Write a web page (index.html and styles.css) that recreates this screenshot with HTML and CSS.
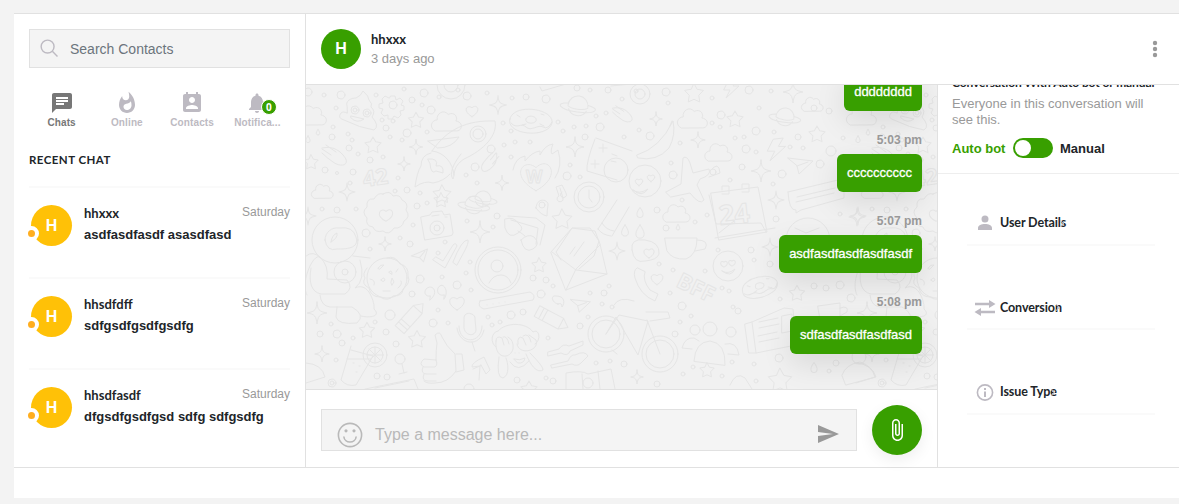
FILE: index.html
```html
<!DOCTYPE html>
<html lang="en">
<head>
<meta charset="utf-8">
<title>Chat</title>
<link rel="stylesheet" href="styles.css">
</head>
<body>
<div class="app">
  <aside class="sidebar">
    <div class="search">
      <svg class="search-icon" viewBox="0 0 20 20"><circle cx="8" cy="8" r="6.8"/><path d="M13 13l5.4 5.4"/></svg>
      <span class="search-text">Search Contacts</span>
    </div>
    <nav class="tabs">
      <div class="tab active"><svg viewBox="0 0 24 24"><path d="M20 2H4c-1.100 0-1.990.9-1.990 2L2 22l4-4h14c1.100 0 2-.9 2-2V4c0-1.100-.9-2-2-2zM6 9h12v2H6V9zm8 5H6v-2h8v2zm4-6H6V6h12v2z"/></svg><span>Chats</span></div>
      <div class="tab"><svg viewBox="0 0 24 24"><path d="M13.500.67s.74 2.650.74 4.800c0 2.060-1.350 3.730-3.410 3.730-2.070 0-3.630-1.670-3.630-3.730l.03-.36C5.210 7.510 4 10.620 4 14c0 4.420 3.580 8 8 8s8-3.580 8-8C20 8.610 17.410 3.800 13.500.67zM11.710 19c-1.780 0-3.220-1.400-3.220-3.140 0-1.620 1.050-2.760 2.810-3.120 1.770-.36 3.600-1.210 4.620-2.580.39 1.290.59 2.650.59 4.040 0 2.650-2.150 4.800-4.800 4.800z"/></svg><span>Online</span></div>
      <div class="tab"><svg viewBox="0 0 24 24"><path d="M19 3h-1V1h-2v2H8V1H6v2H5c-1.110 0-2 .9-2 2v14c0 1.100.89 2 2 2h14c1.100 0 2-.9 2-2V5c0-1.100-.9-2-2-2zm-7 3c1.660 0 3 1.340 3 3s-1.340 3-3 3-3-1.340-3-3 1.340-3 3-3zm6 12H6v-1c0-2 4-3.100 6-3.100s6 1.100 6 3.100v1z"/></svg><span>Contacts</span></div>
      <div class="tab"><svg viewBox="0 0 24 24"><path d="M12 22c1.100 0 2-.9 2-2h-4c0 1.100.89 2 2 2zm6-6v-5c0-3.070-1.640-5.640-4.500-6.320V4c0-.83-.67-1.500-1.500-1.500s-1.500.67-1.500 1.500v.68C7.630 5.360 6 7.920 6 11v5l-2 2v1h16v-1l-2-2z"/></svg><span>Notifica...</span><b class="badge">0</b></div>
    </nav>
    <h2 class="section-title">RECENT CHAT</h2>
    <div class="contact"><div class="avatar yellow">H<i class="status"></i></div><div class="contact-body"><div class="name">hhxxx</div><div class="preview">asdfasdfasdf asasdfasd</div></div><time>Saturday</time></div>
    <div class="contact"><div class="avatar yellow">H<i class="status"></i></div><div class="contact-body"><div class="name">hhsdfdff</div><div class="preview">sdfgsdfgsdfgsdfg</div></div><time>Saturday</time></div>
    <div class="contact"><div class="avatar yellow">H<i class="status"></i></div><div class="contact-body"><div class="name">hhsdfasdf</div><div class="preview">dfgsdfgsdfgsd sdfg sdfgsdfg</div></div><time>Saturday</time></div>
  </aside>
  <main class="main">
    <header class="header">
      <div class="avatar green">H</div>
      <div class="peer"><div class="name">hhxxx</div><div class="ago">3 days ago</div></div>
      <svg class="more" viewBox="0 0 6 18"><circle cx="3" cy="3" r="2.200"/><circle cx="3" cy="9" r="2.200"/><circle cx="3" cy="15" r="2.200"/></svg>
    </header>
    <div class="columns">
      <section class="conversation">
        <div class="messages">
          <svg class="wallpaper" viewBox="306 85 631 304"></svg>
          <div class="bubble first">dddddddd</div>
          <div class="stamp">5:03 pm</div><div class="bubble">cccccccccc</div>
          <div class="stamp">5:07 pm</div><div class="bubble">asdfasdfasdfasdfasdf</div>
          <div class="stamp">5:08 pm</div><div class="bubble">sdfasdfasdfasdfasd</div>
        </div>
        <div class="composer">
          <div class="field">
            <svg class="smile" viewBox="0 0 26 26"><circle cx="13" cy="13" r="11.600"/><path d="M6.800 14.500c.7 7.300 11.700 7.300 12.400 0"/><circle class="dot" cx="9" cy="8.800" r="1.600"/><circle class="dot" cx="17" cy="8.800" r="1.600"/></svg>
            <span>Type a message here...</span>
            <svg class="send" viewBox="2 3 21 18"><path d="M2.010 21L23 12 2.010 3 2 10l15 2-15 2z"/></svg>
          </div>
          <div class="attach"><svg viewBox="0 0 24 24"><path d="M16.500 6v11.500c0 2.210-1.790 4-4 4s-4-1.790-4-4V5c0-1.380 1.120-2.500 2.500-2.500s2.500 1.120 2.500 2.500v10.500c0 .55-.45 1-1 1s-1-.45-1-1V6H10v9.500c0 1.380 1.120 2.500 2.500 2.500s2.500-1.120 2.500-2.500V5c0-2.210-1.790-4-4-4S7 2.790 7 5v12.500c0 3.040 2.460 5.500 5.500 5.500s5.500-2.460 5.500-5.500V6h-1.500z"/></svg></div>
        </div>
      </section>
      <aside class="details">
        <div class="mode">
          <div class="mode-title">Conversation With Auto bot or manual</div>
          <p>Everyone in this conversation will<br>see this.</p>
          <div class="switch-row"><span class="auto">Auto bot</span><span class="switch"></span><span>Manual</span></div>
        </div>
        <div class="rows">
          <div class="row"><svg viewBox="0 0 22 20"><path d="M11 9.500a3.500 3.500 0 1 0 0-7 3.500 3.500 0 0 0 0 7zM4 17v-2c0-2.600 3.500-4 7-4s7 1.400 7 4v2z"/></svg><span>User Details</span><i class="chev"></i></div>
          <div class="row"><svg viewBox="0 0 22 20"><path d="M1 4.700h14V2l6.500 4-6.500 4V7.300H1zM21 12.700H7V10L.5 14 7 18v-2.700h14z"/></svg><span>Conversion</span><i class="chev"></i></div>
          <div class="row"><svg viewBox="0 0 22 20"><circle class="line" cx="11" cy="10.500" r="7.600"/><path d="M10 9.500h2V15h-2zM10 6h2v2h-2z"/></svg><span>Issue Type</span><i class="chev"></i></div>
        </div>
      </aside>
    </div>
  </main>
</div>
<script src="wallpaper.js"></script>
</body>
</html>
```
FILE: styles.css
```css
* { box-sizing: border-box; }
body { margin: 0; height: 504px; overflow: hidden; background: #f3f3f3; font-family: "Liberation Sans", Arial, sans-serif; font-size: 13px; color: #212529; padding: 13px 0 6px 14px; }
.app { display: flex; height: 485px; background: #fff; border-top: 1px solid #e1e1e1; padding-bottom: 30px; }
.sidebar { width: 292px; height: 454px; padding: 15px 15px 0; border-right: 1px solid #e1e1e1; border-bottom: 1px solid #e1e1e1; overflow: hidden; }
.search { height: 39px; border: 1px solid #e1e1e1; background: #f4f4f4; display: flex; align-items: center; padding-left: 10px; gap: 11px; }
.search-icon { width: 19px; height: 19px; fill: none; stroke: #bdbac2; stroke-width: 1.500; }
.search-text { font-size: 14px; color: #6c757d; letter-spacing: 0; padding-top: 1px; }
.tabs { display: flex; margin-top: 23px; height: 40px; }
.tab { flex: 1; display: flex; flex-direction: column; align-items: center; position: relative; color: #bdbac2; font-size: 10px; font-weight: bold; line-height: 16px; letter-spacing: .12px; }
.tab svg { width: 24px; height: 24px; fill: currentColor; }
.tab.active { color: #777; }
.badge { position: absolute; left: 36px; top: 8px; width: 16px; height: 16px; border-radius: 50%; background: #389f00; border: 1px solid #fff; color: #fff; font: bold 10px/14px "Open Sans", sans-serif; text-align: center; letter-spacing: 0; }
.section-title { margin: 20px 0 17px; font: bold 11.500px/18px Lato, sans-serif; letter-spacing: .45px; color: #212529; }
.contact { height: 91px; border-top: 2px solid #fafafa; display: flex; padding: 17px 0 0 2px; }
.avatar { border-radius: 50%; color: #fff; font-weight: bold; font-size: 16px; display: flex; align-items: center; justify-content: center; position: relative; flex: none; }
.yellow { width: 41px; height: 41px; background: #ffc107; }
.green { width: 40px; height: 40px; background: #389f00; }
.status { position: absolute; left: -7px; bottom: 5px; width: 15px; height: 15px; border-radius: 50%; background: #ffae1f; border: 4px solid #fff; }
.contact-body { margin-left: 12px; flex: 1; white-space: nowrap; }
.name { font: bold 13px/19px Lato, sans-serif; }
.contact .name { margin-top: -1px; }
.preview { font-weight: bold; line-height: 17px; margin-top: 3px; }
.contact time { font-size: 12px; line-height: 14px; color: #999; width: 48px; margin-left: -48px; }
.main { flex: 1; height: 454px; display: flex; flex-direction: column; border-bottom: 1px solid #e1e1e1; }
.header { height: 71px; border-bottom: 1px solid #e1e1e1; padding: 15px 21px 15px 15px; display: flex; }
.peer { margin-left: 10px; padding-top: 1px; flex: 1; }
.ago { color: #999; line-height: 19px; }
.more { width: 6px; height: 18px; fill: #999; margin-top: 11px; }
.columns { display: flex; height: 382px; }
.conversation { width: 632px; border-right: 1px solid #e1e1e1; }
.messages { height: 305px; position: relative; overflow: hidden; background: #f1f1f1; border-bottom: 1px solid #e1e1e1; display: flex; flex-direction: column; align-items: flex-end; padding-right: 15px; }
.wallpaper { position: absolute; left: 0; top: 0; width: 631px; height: 304px; fill: none; stroke: #e5e5e5; stroke-width: 1; stroke-linecap: round; stroke-linejoin: round; }
.wallpaper text { font: 22px "Open Sans", sans-serif; stroke-width: 1; }
.wallpaper .bold { font-weight: bold; }
.bubble { position: relative; flex: none; height: 38px; padding: 0 10px; border-radius: 6px; background: #389f00; color: #fff; font-size: 13px; line-height: 38px; box-shadow: 0 10px 30px rgba(0,0,0,.1); -webkit-text-stroke: .3px #fff; }
.bubble.first { margin-top: -12px; }
.stamp { position: relative; flex: none; height: 43px; padding-top: 20px; line-height: 18px; font-size: 12px; font-weight: bold; color: #999; }
.composer { height: 77px; display: flex; padding: 15px; gap: 15px; }
.field { width: 536px; height: 42px; margin-top: 4px; border: 1px solid #e1e1e1; background: #f4f4f4; display: flex; align-items: center; padding: 8px 17px 0 15px; color: #b9b9b9; font-size: 16px; }
.field span { flex: 1; margin-left: 12px; padding-top: 2px; }
.smile { width: 26px; height: 26px; margin-top: 2px; fill: none; stroke: #b9b9b9; stroke-width: 1.600; }
.dot { fill: #b9b9b9; stroke: none; }
.send { width: 21px; height: 18px; fill: #999; }
.attach { width: 50px; height: 50px; border-radius: 50%; background: #389f00; box-shadow: 0 5px 15px rgba(0,0,0,.07); display: flex; align-items: center; justify-content: center; }
.attach svg { width: 24px; height: 24px; fill: #fff; }
.details { width: 241px; overflow: hidden; }
.mode { display: flow-root; height: 89px; padding-left: 14px; border-bottom: 1px solid #eee; }
.mode-title { font: bold 12px/18px Lato, sans-serif; margin-top: -11px; letter-spacing: -.1px; white-space: nowrap; }
.mode p { margin: 4px 0 0; line-height: 16px; color: #999; }
.switch-row { display: flex; align-items: center; gap: 7px; height: 20px; margin-top: 10px; font-weight: bold; }
.auto { color: #389f00; width: 54px; }
.switch { width: 40px; height: 20px; border-radius: 10px; background: #389f00; padding: 2px; }
.switch::before { content: ""; display: block; width: 16px; height: 16px; border-radius: 50%; background: #fff; }
.rows { padding: 29px 24px 0 29px; display: flex; flex-direction: column; gap: 42px; }
.row { height: 42.500px; border-bottom: 2px solid #fafafa; display: flex; align-items: center; padding-left: 7px; font: bold 12.500px/18px Lato, sans-serif; letter-spacing: -.1px; }
.row svg { width: 22px; height: 20px; margin-right: 4px; fill: #bdbac2; }
.row .line { fill: none; stroke: #bdbac2; stroke-width: 1.600; }
.chev { width: 5px; height: 5px; border: solid #bdbac2; border-width: 1px 1px 0 0; transform: rotate(45deg); margin-left: -8px; }
```
FILE: wallpaper.js
```js
const svg = document.querySelector('.wallpaper');
const shapes = {
  star: 'M0-9L3-3.500 9-2.500 4.500 2.200 5.500 8.500 0 6-5.500 8.500-4.500 2.200-9-2.500-3-3.500Z',
  spark: 'M0-10C.5-3 1.500-1.500 9 0C2 1 .8 3 0 10C-.8 3-2 1-9 0C-1.500-1.500-.5-3 0-10Z',
  cloud: 'M-10 9C-16 6-13-1-8-1C-9-7-2-11 2-6C8-9 11-3 9 0C16 1 15 9 10 9Z',
  heart: 'M0 7C-13 0-6-9 0-4C6-10 13 0 0 7Z',
  drop: 'M0-5C-6 3-3 6 0 6C3 6 6 3 0-5Z',
  planet: 'M-10 0A10 10 0 0 1 10 0M-9 4A10 10 0 0 0 9 4M-10-2C-24 0-18 6 0 6S24 0 10-2M-10 1C-6 4 6 4 10 1',
  meteor: 'M-13-6C-4-8 3-5 8 1C17 11 6 14-2 8Q-8 4-13-1M-9-9L1-2M-13-5L-4 1',
  bolt: 'M-2-9L6-10 2-3 8-3-5 9-1 1-7 1Z',
  plane: 'M-12-7L13-4-1 9-3 1ZM-3 1L8-3',
  pencil: 'M-17-6L10-6 18 0 10 6-17 6ZM10-6L10 6M-12-6V6M-8-6V6',
  donut: 'M-21-2C-18-18 23-13 21 2C17 18-26 14-21-2ZM-5-2C-4-7 7-5 5 0C2 4-7 2-5-2M-14-6l3 2M-9 4l4-1M9 3l4 2M10-7l3 1M-20 2C-14 9-10 1-5 6C0 11 7 3 12 6Q17 9 21 1'
};
const marks = {
  star: [[416,120,.85],[373,145,.9],[311,162,.8],[442,194,1],[562,219,1.1],[539,265,.8],[367,330,.85],[417,339,.95],[694,93,1.05],[735,119,.9],[817,134,.9],[797,293,.85],[707,370,.8],[780,380,1.3],[529,389,.9],[441,200,.8]],
  spark: [[498,105,.95],[416,147,.75],[404,164,.7],[575,147,1],[502,183,.75],[347,192,.9],[480,232,1.1],[385,244,.7],[317,313,1.1],[617,251,.9],[793,92,1.1],[656,119,.7],[698,140,.8],[761,171,1.1],[776,200,.9],[857,217,.9],[770,247,.9],[637,377,.7],[308,216,.9],[322,354,.8]],
  cloud: [[311,115,1.1],[446,121,1.1],[322,191,.8],[692,118,1.1],[812,104,.8],[718,152,1],[676,213,1]],
  heart: [[472,111,.8],[536,176,2.100],[386,215,.9],[457,303,1],[657,279,.8],[649,253,.7],[639,182,.5],[651,178,.5],[724,264,.45],[732,263,.45]],
  drop: [[318,132,.5],[308,139,.6],[640,212,.9],[625,230,1],[640,231,1.2],[814,367,.9],[678,227,.5]],
  planet: [[578,106,1],[483,199,.8],[474,205,.9],[785,117,.9]],
  meteor: [[335,154,1],[623,113,.8]],
  bolt: [[731,89,1],[776,150,1.2]],
  plane: [[580,305,.8],[800,165,1]],
  donut: [[531,121,1]]
};
const parts = [];
const put = (d, x, y, s = 1, r = 0) => parts.push(`<path transform="translate(${x} ${y}) rotate(${r}) scale(${s})" stroke-width="${1 / s}" d="${d}"/>`);
for (const [name, list] of Object.entries(marks)) for (const [x, y, s] of list) put(shapes[name], x, y, s, name === 'planet' ? 8 : 0);
put(shapes.donut, 760, 287, .85, -18);
put(shapes.meteor, 491, 163, .8, 95);
put(shapes.plane, 421, 256, .7, -30);
put(shapes.pencil, 411, 317, 1, -48);
put(shapes.pencil, 552, 319, 1, 28);
const ring = (x, y, ...rs) => rs.forEach(r => parts.push(`<circle cx="${x}" cy="${y}" r="${r}"/>`));
[[393,105,4],[478,134,8,5],[589,197,15,11],[437,228,7,3],[498,270,23,20],[497,266,6],[387,278,20],[335,240,23],[345,272,11,3],[375,355,12,8],[400,359,5],[606,334,18,14],[660,354,18,14],[640,94,10,5],[645,181,16],[728,266,15],[542,205,3],[710,329,7],[695,330,5],[731,332,5],[355,110,4,2],[367,113,4,2],[616,170,12],[808,240,22],[859,357,7],[451,85,14,7],[332,383,4,2],[588,383,5],[636,91,2]].forEach(a => ring(...a));
const line = d => parts.push(`<path d="${d}"/>`);
line('M347 106C345 101 351 98 356 98Q361 96 363 91Q369 96 369 100Q373 104 371 107Q376 111 372 117Q380 126 374 130Q360 128 344 120Q337 118 341 113Q343 111 347 113ZM351 118Q357 124 364 119L351 116Z');
line('M391 96l4 0 1 4 4-2 3 3-2 4 3 1v4l-4 1 1 4-3 3-4-2-2 3h-4l0-4-4 1-3-3 2-4-4-1v-4l4-1-1-4 3-3 4 2Z');
line('M432 151C447 129 467 120 495 121C498 135 484 150 464 159C452 167 455 175 453 179C449 174 453 164 461 154M432 151C444 152 453 163 454 175M431 153Q421 155 421 166Q417 172 415 187Q425 180 433 183Q444 181 450 174M428 159Q439 158 436 166Q444 164 443 173L436 171Q431 175 430 164ZM428 141L459 137Q452 148 438 148Z');
line('M513 170Q515 158 525 156L525 161Q532 152 540 151L540 155Q545 145 553 144Q550 151 552 154L558 150Q563 166 555 178');
line('M596 138L632 151M595 139Q586 162 587 171L617 180M603 144v8M599 148h8M595 160v8M591 164h8M612 154l5 2M611 161l5 1M560 188L563 198A3 3 0 1 1 559 196L556 187 562 185 566 193A3 3 0 1 1 562 192');
line('M383 194Q390 190 393 196Q400 194 402 200Q409 203 406 210Q411 217 404 221Q402 229 394 228Q389 236 383 231Q375 233 373 227Q365 226 367 218Q361 212 367 207Q366 198 374 199Q378 192 383 194Z');
line('M421 217L430 215 432 212 442 211 444 215 450 214 453 233Q453 236 449 236L425 240ZM432 216l7-1M445 217h2');
line('M505 219Q514 216 519 224Q525 229 518 233Q509 240 505 228ZM521 240Q528 233 534 237Q541 244 533 249Q524 254 521 240ZM518 231Q523 234 525 236M508 216L536 218 545 225 540 245M536 244L538 228 511 220M536 208C537 196 549 200 548 205Q547 211 547 216Q541 215 536 208Z');
line('M551 252L572 228 595 231 600 244 607 274 566 290ZM552 252L576 270 607 274M566 290L576 269 600 245M561 260L556 252 572 228H590L599 241 594 256 579 269M570 254l5-7M574 256l10-14');
line('M598 229L617 200M612 236L629 207M598 229Q602 235 611 236M602 223Q606 230 614 231M306 256Q313 250 321 258M307 295C300 283 313 253 320 257Q329 266 327 279L347 280Q354 288 345 294H321Q307 291 311 268M353 256L370 258M360 260Q366 280 355 288C369 281 375 304 374 309C382 317 368 318 361 316M320 295Q321 306 330 307H352Q366 315 357 323Q338 325 336 317L337 307M325 240C325 232 332 227 339 228Q353 226 356 237C360 249 345 249 337 249Q327 252 325 240ZM331 242q1-7 6-9q1 5-6 9');
line('M378 268q3-4 6-3l-4 4ZM389 272q3-3 3 2ZM381 280q3-4 4 0q-2 3-4 0M391 282l1-4 2 4-2 3ZM370 279q6 1 4 6M398 269l-2 3M398 288q5-4 3-7M383 291h7M367 268Q362 274 365 278Q361 284 369 288Q371 297 380 297Q388 302 393 296Q403 296 403 289Q411 283 408 276Q409 266 400 264Q395 255 387 258');
line('M433 260L445 268Q453 253 457 246Q456 242 453 245L443 261 436 257ZM453 262Q462 239 468 240Q469 243 464 252L457 265Z');
line('M489 283Q493 275 501 275Q508 275 511 283M430 300C440 292 432 283 426 289C423 294 427 297 430 296ZM444 299C450 292 443 280 438 288C436 294 441 296 444 295ZM558 304C552 303 550 295 556 296C565 296 565 303 562 307Q562 302 558 304Z');
line('M480 301L530 292Q536 295 533 300L484 309Q477 307 480 301ZM487 305h.1M493 304h.1M499 303h.1M505 302h.1');
line('M464 319C463 310 476 313 475 319L476 330C475 337 465 336 464 328ZM459 326C459 345 482 344 482 326M457 328C459 345 480 348 484 330M472 342L475 351');
line('M498 331C506 322 526 322 533 332C540 328 541 341 535 344M498 331C491 332 490 343 496 347M496 341Q496 335 502 338L504 345M503 337Q507 335 509 344M508 337Q514 340 513 349C510 360 494 359 496 341M518 344Q517 335 523 338L526 345M523 336Q529 332 531 342M529 335L536 340C540 351 519 356 517 344M499 357Q496 378 503 378C510 375 508 363 506 358M530 353Q544 367 543 370C535 374 529 361 526 354M510 362Q518 374 529 361M514 359q6 2 11-1q-1 6-7 5ZM515 353h.1M519 353h.1');
line('M436 360Q436 349 437 343L435 335Q440 330 442 337Q446 346 455 354L456 371Q448 383 435 383Q427 384 424 381M436 360L424 359Q418 364 424 367H435Q438 365 436 360M423 367Q420 374 427 374H436M424 374Q421 381 428 381H436M456 354L462 354 464 370 456 372');
line('M351 346L341 380Q347 387 356 385L373 356 351 350M347 359L371 359M353 363h1M359 366h1M356 372h1M375 347V363M367 355h16M369 349l12 12M381 349l-12 12M402 364L404 373M399 374l8-2M479 380L480 366 473 369M480 366L472 367Q471 363 484 357L490 370 486 374 481 365Z');
line('M548 352L559 349Q563 343 569 346L583 341V345L570 351Q568 357 561 353L548 356ZM551 365L568 361Q571 354 575 355Q585 350 588 356L581 363Q577 367 572 364L552 368Z');
line('M566 389L566 373Q582 370 588 374L611 369 615 389M582 374L583 389M598 371L600 389M306 363Q322 364 325 377L306 383M365 389L414 379 418 389M375 388L409 381');
line('M606 334L616 317 638 355 648 321 619 315 606 334M614 305Q619 296 634 301M647 320L660 354M646 312H668L670 318 650 321M617 354L612 350');
line('M637 155Q660 148 673 121Q676 135 669 148Q657 162 638 158ZM672 121l-2 5');
line('M666 192L681 184 683 158Q687 155 690 163L693 173 709 169Q712 175 700 179L697 185 704 200Q700 206 690 193L671 197ZM710 171Q719 160 720 173L709 177');
line('M711 193L758 187 767 232 719 240ZM709 195L716 224 761 223 766 232M722 190v-4h7v8h-7M742 188v-4h7v8h-7');
line('M788 192L838 180Q845 182 844 198L801 210 796 213 796 210Q789 211 788 192M797 197l38-9M796 202l38-9');
line('M632 250Q630 238 645 240Q660 242 659 254Q657 260 645 261Q634 264 632 250M665 238L697 238Q697 255 686 259Q672 260 667 251ZM697 240Q710 240 705 249L695 251M637 268Q633 270 635 278Q640 295 655 301L658 294 650 290Q642 280 645 272Z');
line('M694 361Q695 342 710 341Q726 343 725 365ZM692 349L682 348Q685 337 694 338L699 341M725 344Q737 341 739 355L728 354');
line('M745 324L752 322 784 308 793 309 796 345 756 353 749 353ZM752 322L756 353M759 322l19-4M759 328l20-4M758 336l19-4M759 342l20-4M782 316l10-2v17l-10 2Z');
line('M818 306L840 303 840 319 821 323ZM840 308Q849 305 847 312L840 316M842 375Q846 364 860 362Q872 366 876 377L846 385ZM715 238L775 228M719 233L734 221M795 228l11 5 13-5M633 190q6 5 15-1q-6 9-15 1M722 271q6 4 13-2q-4 9-13 2M730 385Q736 371 745 378L752 389');
line('M611 86L641 83M540 87L542 91 566 84M589 190v8l3 4');
const dots = `308 92 4,324 95 2,341 95 4,376 95 2,404 89 2,424 93 4,439 97 2,458 90 2,467 96 4,487 93 2,512 98 2,526 97 3,546 99 4,577 88 3,590 90 2,336 108 2,412 100 3,422 105 2,431 110 4,382 120 2,393 121 2,386 128 3,407 133 4,427 132 2,333 127 2,332 137 3,348 134 2,352 140 2,349 148 3,370 160 3,383 157 2,390 137 2,402 140 2,358 154 2,325 170 3,337 173 1.500,353 172 3,350 183 2,398 178 2,395 191 2,407 190 3,420 193 2,491 149 4,504 145 2,503 123 2,511 131 2,515 142 2,530 142 2,511 157 2,475 167 4,466 175 2,477 183 2,558 122 2,574 127 2,586 126 2,600 127 4,596 116 2,606 113 2,563 131 2,585 137 3,567 176 4,570 165 2,580 177 2,608 90 3,322 209 2,337 210 3,356 209 2,366 233 4,400 238 2,410 244 3,413 225 2,370 249 2,445 242 2,438 253 2,417 206 3,427 203 2,497 216 3,467 221 2,493 227 2,470 262 2,466 273 2,442 277 2,420 279 4,457 285 4,471 290 2,412 294 3,438 310 2,433 323 4,448 323 2,390 315 5,375 322 2,386 332 3,396 344 3,331 324 2,320 334 3,337 334 4,353 338 2,342 343 3,377 376 3,387 377 3,336 360 2,541 294 4,533 278 3,546 280 3,553 286 2,511 315 4,523 312 3,488 317 2,500 322 2,492 325 2,580 326 3,588 317 2,602 304 2,612 307 2,604 293 3,590 293 2,609 286 2,548 338 2,517 380 3,546 378 2,553 381 3,596 363 2,610 361 2,469 389 5,622 99 2,666 92 4,668 103 2,712 98 2,721 115 4,712 123 2,749 90 4,771 91 2,720 127 2,759 108 2,756 131 4,735 138 2,744 137 2,798 137 3,774 132 2,814 108 3,829 111 3,650 136 4,639 130 2,624 137 2,671 163 2,673 175 4,680 143 2,746 149 4,756 152 2,713 172 3,742 167 3,773 184 2,782 174 4,790 147 2,803 148 2,820 164 4,831 151 5,843 138 2,657 210 3,666 228 3,695 222 2,707 215 2,776 219 3,730 180 2,682 200 2,751 250 3,754 260 2,770 264 3,718 250 2,659 264 2,673 270 2,670 293 2,682 306 4,705 271 2,722 288 2,729 291 2,680 322 2,675 334 3,691 316 2,733 307 2,738 311 3,780 299 2,814 286 3,826 288 3,840 285 4,851 298 4,732 362 2,754 364 2,779 358 4,683 374 2,693 367 2,722 376 2,756 381 2,829 371 2,836 363 3,657 384 3,624 364 3,840 214 2,808 352 2`;
dots.split(',').forEach(t => { const [x, y, r] = t.split(' '); ring(x, y, r); });
parts.push('<text class="bold" transform="translate(364 187) rotate(-8)">42</text><text class="bold" x="526" y="183" style="font-size:17px">W</text><text class="bold" transform="translate(720 225) rotate(-6)" style="font-size:27px">24</text><text class="bold" transform="translate(675 286) rotate(26)" style="font-size:22px">BFF</text>');
svg.innerHTML = `<g id="tile">${parts.join('')}</g><use href="#tile" x="550"/>`;
```
